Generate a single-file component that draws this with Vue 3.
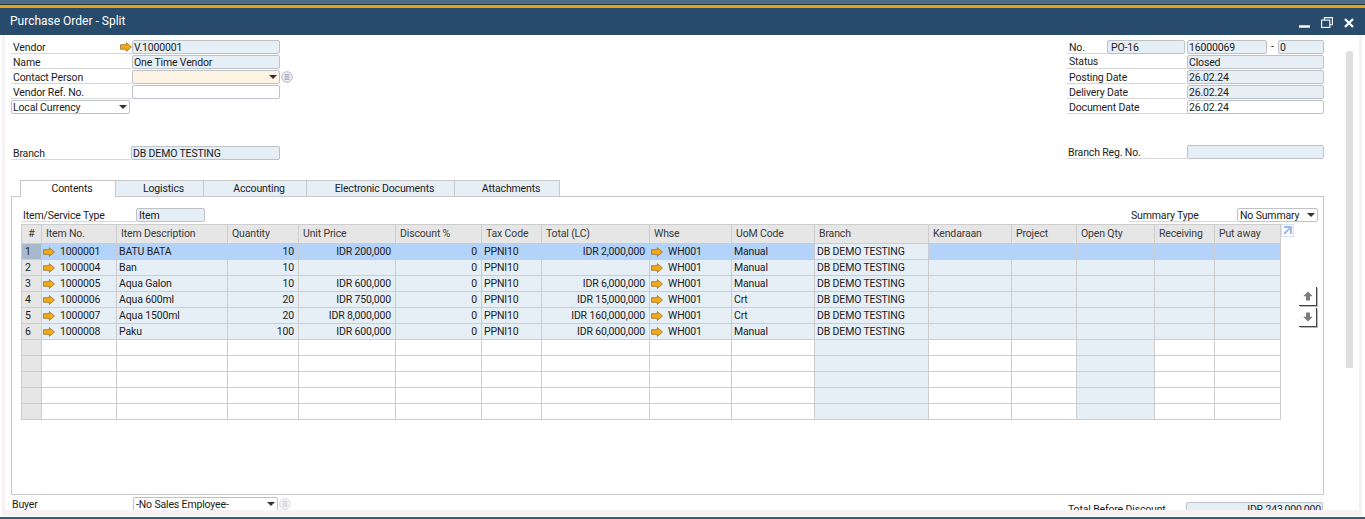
<script setup>
const cols = ['#','Item No.','Item Description','Quantity','Unit Price','Discount %','Tax Code','Total (LC)','Whse','UoM Code','Branch','Kendaraan','Project','Open Qty','Receiving','Put away']
const rows = [
  ['1000001','BATU BATA','10','IDR 200,000','IDR 2,000,000','Manual'],
  ['1000004','Ban','10','','','Manual'],
  ['1000005','Aqua Galon','10','IDR 600,000','IDR 6,000,000','Manual'],
  ['1000006','Aqua 600ml','20','IDR 750,000','IDR 15,000,000','Crt'],
  ['1000007','Aqua 1500ml','20','IDR 8,000,000','IDR 160,000,000','Crt'],
  ['1000008','Paku','100','IDR 600,000','IDR 60,000,000','Manual'],
]
const tabs = [
  { name: 'Contents', cls: 'w-contents' },
  { name: 'Logistics', cls: 'w-logistics' },
  { name: 'Accounting', cls: 'w-accounting' },
  { name: 'Electronic Documents', cls: 'w-electronic' },
  { name: 'Attachments', cls: 'w-attachments' },
]
const emptyRows = 5
const blankCols = 16
const arrowPath = 'M0.5 2.7H6.3V0.6L11.5 5L6.3 9.4V7.3H0.5Z'
</script>

<template>
  <div class="window">
    <div class="strip"></div>
    <div class="strip-line"></div>
    <div class="strip-orange"></div>
    <header class="titlebar">
      <span class="title">Purchase Order - Split</span>
      <div class="win-controls">
        <svg width="11" height="3" viewBox="0 0 11 3"><rect width="11" height="2.4" y="0.3" fill="#fff"/></svg>
        <svg width="12" height="11" viewBox="0 0 12 11" fill="none" stroke="#fff" stroke-width="1.1"><rect x="0.6" y="3.1" width="8.2" height="7.3"/><path d="M3.4 3V0.6H11.4V7.8H8.9"/></svg>
        <svg width="10" height="10" viewBox="0 0 10 10" fill="none" stroke="#fff" stroke-width="2.3"><path d="M1 1L9 9M9 1L1 9"/></svg>
      </div>
    </header>

    <div class="body">
      <div class="gutter-left"></div>
      <main class="content">
        <section class="head">
          <div class="head-left">
            <div class="row">
              <div class="label">Vendor
                <svg class="arrow" width="12" height="10" viewBox="0 0 12 10"><path :d="arrowPath" fill="#f4a817" stroke="#94742a" stroke-width="0.8"/></svg>
              </div>
              <div class="field">V.1000001</div>
            </div>
            <div class="row"><div class="label">Name</div><div class="field">One Time Vendor</div></div>
            <div class="row">
              <div class="label">Contact Person</div>
              <div class="field cream"><i class="caret"></i></div>
              <svg class="list-btn" width="12" height="12" viewBox="0 0 12 12"><circle cx="6" cy="6" r="5.3" fill="#eceef4" stroke="#b4b8cc"/><path d="M3.5 3.8H8.5M3.5 6H8.5M3.5 8.2H8.5" stroke="#8a90a8"/></svg>
            </div>
            <div class="row"><div class="label">Vendor Ref. No.</div><div class="field white"></div></div>
            <div class="row"><div class="field white currency">Local Currency<i class="caret"></i></div></div>
            <div class="row branch-row"><div class="label short">Branch</div><div class="field wide">DB DEMO TESTING</div></div>
          </div>

          <div class="head-right">
            <div class="row">
              <div class="label no-label">No.</div>
              <div class="field series">PO-16</div>
              <div class="field docnum">16000069</div>
              <span class="dash">-</span>
              <div class="field copy">0</div>
            </div>
            <div class="row"><div class="label r-label status-label">Status</div><div class="field r-field">Closed</div></div>
            <div class="row"><div class="label r-label">Posting Date</div><div class="field r-field">26.02.24</div></div>
            <div class="row"><div class="label r-label">Delivery Date</div><div class="field r-field">26.02.24</div></div>
            <div class="row"><div class="label r-label">Document Date</div><div class="field r-field white">26.02.24</div></div>
            <div class="row reg-row"><div class="label r-label reg-label">Branch Reg. No.</div><div class="field r-field"></div></div>
          </div>
        </section>

        <nav class="tabs">
          <div v-for="(t, i) in tabs" :key="t.name" class="tab" :class="[t.cls, { active: i === 0 }]">{{ t.name }}</div>
        </nav>

        <section class="panel">
          <div class="type-row">
            <div class="type-left">
              <div class="label type-label">Item/Service Type</div>
              <div class="field type-field">Item</div>
            </div>
            <div class="type-right">
              <div class="label summary-label">Summary Type</div>
              <div class="field white summary-field">No Summary<i class="caret"></i></div>
            </div>
          </div>

          <div class="table-wrap">
            <div class="grid">
              <div v-for="c in cols" :key="c" class="cell hd" :class="{ 'hd-num': c === '#' }">{{ c }}</div>

              <template v-for="(r, i) in rows" :key="r[0]">
                <div class="cell num" :class="{ 'num-sel': i === 0 }">{{ i + 1 }}</div>
                <div class="cell blue link" :class="{ sel: i === 0 }">
                  <svg class="arrow" width="12" height="10" viewBox="0 0 12 10"><path :d="arrowPath" fill="#f4a817" stroke="#94742a" stroke-width="0.8"/></svg>
                  <span>{{ r[0] }}</span>
                </div>
                <div class="cell blue" :class="{ sel: i === 0 }">{{ r[1] }}</div>
                <div class="cell blue right" :class="{ sel: i === 0 }">{{ r[2] }}</div>
                <div class="cell blue right" :class="{ sel: i === 0 }">{{ r[3] }}</div>
                <div class="cell blue right" :class="{ sel: i === 0 }">0</div>
                <div class="cell blue" :class="{ sel: i === 0 }">PPNI10</div>
                <div class="cell blue right" :class="{ sel: i === 0 }">{{ r[4] }}</div>
                <div class="cell blue link" :class="{ sel: i === 0 }">
                  <svg class="arrow" width="12" height="10" viewBox="0 0 12 10"><path :d="arrowPath" fill="#f4a817" stroke="#94742a" stroke-width="0.8"/></svg>
                  <span>WH001</span>
                </div>
                <div class="cell blue" :class="{ sel: i === 0 }">{{ r[5] }}</div>
                <div class="cell blue">DB DEMO TESTING</div>
                <div class="cell blue" :class="{ sel: i === 0 }"></div>
                <div class="cell blue" :class="{ sel: i === 0 }"></div>
                <div class="cell blue" :class="{ sel: i === 0 }"></div>
                <div class="cell blue" :class="{ sel: i === 0 }"></div>
                <div class="cell blue" :class="{ sel: i === 0 }"></div>
              </template>

              <template v-for="e in emptyRows" :key="'e' + e">
                <div
                  v-for="n in blankCols"
                  :key="n"
                  class="cell"
                  :class="{ num: n === 1, blue: n === 11 || n === 14 }"
                ></div>
              </template>
            </div>

            <aside class="side">
              <svg class="expand" width="13" height="13" viewBox="0 0 13 13"><rect x="0.5" y="0.5" width="12" height="12" fill="#fff" stroke="#d3e0f5"/><path d="M3 3H10V10M10 3L3 10" fill="none" stroke="#9db9e6" stroke-width="2"/></svg>
              <button class="move up" type="button" aria-label="Move up">
                <svg width="10" height="10" viewBox="0 0 10 10"><path d="M5 0.5L9.8 5.2H7V9.5H3V5.2H0.2Z" fill="#7c7c7c"/></svg>
              </button>
              <button class="move" type="button" aria-label="Move down">
                <svg width="10" height="10" viewBox="0 0 10 10"><path d="M5 9.5L9.8 4.8H7V0.5H3V4.8H0.2Z" fill="#7c7c7c"/></svg>
              </button>
            </aside>
          </div>
        </section>

        <section class="foot">
          <div class="foot-left">
            <span class="buyer-label">Buyer</span>
            <div class="field white buyer">-No Sales Employee-<i class="caret"></i></div>
            <svg class="list-btn" width="12" height="12" viewBox="0 0 12 12"><circle cx="6" cy="6" r="5.3" fill="#f6f6f8" stroke="#d4d6dc"/><path d="M3.5 3.8H8.5M3.5 6H8.5M3.5 8.2H8.5" stroke="#c0c2ca"/></svg>
          </div>
          <div class="foot-right">
            <span class="total-label">Total Before Discount</span>
            <div class="field total">IDR 243,000,000</div>
          </div>
        </section>
      </main>
      <div class="rail"><div class="scrollbar"></div></div>
      <div class="gutter-right"></div>
    </div>

    <div class="bottom-strip"></div>
    <div class="bottom-line"></div>
  </div>
</template>

<style>
html, body { margin: 0; background: #fff; overflow: hidden; }
</style>

<style scoped>
.window {
  width: 1365px;
  height: 519px;
  display: flex;
  flex-direction: column;
  overflow: hidden;
  background: #fff;
  color: #1c1c1c;
  font-family: Roboto, "Liberation Sans", Arial, sans-serif;
  font-size: 10.5px;
  letter-spacing: -0.15px;
  line-height: 13px;
}
.strip { height: 4px; background: #4f6d84; flex: none; }
.strip-line { height: 1px; background: #1f3447; flex: none; }
.strip-orange { height: 3px; background: #e9a20f; flex: none; }
.titlebar {
  height: 27px;
  flex: none;
  background: #284b6b;
  color: #fff;
  display: flex;
  align-items: center;
  justify-content: space-between;
  padding: 0 11px 0 10px;
}
.title { font-size: 12px; letter-spacing: 0; }
.win-controls { display: flex; align-items: flex-end; gap: 11px; margin-bottom: -1px; }

.body { flex: 1; min-height: 0; display: flex; overflow: hidden; }
.gutter-left {
  width: 3px;
  margin-left: 2px;
  background: #f5f1f5;
  flex: none;
}
.content {
  flex: 1;
  min-width: 0;
  padding: 5px 0 0 6px;
  overflow: hidden;
}
.rail { width: 35px; flex: none; padding: 16px 6px 0 22px; box-sizing: border-box; }
.scrollbar { width: 7px; height: 317px; background: #dedede; border-radius: 3px 3px 0 0; }
.gutter-right { width: 3px; background: #f5f1f5; margin-right: 3px; flex: none; }
.bottom-strip { height: 6px; margin: 0 3px 1px 2px; background: #f5f1f5; flex: none; }
.bottom-line { height: 2px; background: #3c5a72; flex: none; }

.head { display: flex; justify-content: space-between; height: 140px; }
.head-left { width: 285px; }
.head-right { width: 257px; }
.row { display: flex; height: 14px; margin-bottom: 1px; align-items: flex-start; }

.label {
  width: 121px;
  height: 14px;
  box-sizing: border-box;
  flex: none;
  padding: 1px 0 0 2px;
  border-bottom: 1px solid #d8d8d8;
  display: flex;
  align-items: center;
  justify-content: space-between;
}
.label.short { width: 120px; }
.status-label { padding-top: 0; }
.reg-label { padding-left: 1px; }
.arrow { flex: none; }

.field {
  width: 148px;
  height: 14px;
  box-sizing: border-box;
  flex: none;
  padding: 0 1px;
  border: 1px solid #bcc2c8;
  border-radius: 2px;
  background: #e6eef6;
  display: flex;
  align-items: center;
  white-space: nowrap;
  overflow: hidden;
}
.field.wide { width: 149px; }
.white { background: #fff; }
.cream { background: #fdf4e3; }
.caret {
  margin-left: auto;
  margin-right: 1px;
  width: 0;
  height: 0;
  border-left: 4px solid transparent;
  border-right: 4px solid transparent;
  border-top: 4px solid #333;
  flex: none;
}
.list-btn { flex: none; margin: 1px 0 0 1px; }
.currency { width: 119px; }
.branch-row { margin-top: 32px; }

.no-label { width: 40px; }
.series { width: 78px; padding-left: 3px; }
.docnum { width: 80px; margin-left: 2px; }
.dash { width: 11px; text-align: center; flex: none; }
.copy { width: 46px; }
.r-label { width: 120px; }
.r-field { width: 137px; }
.reg-row { margin-top: 31px; }

.tabs { display: flex; padding-left: 9px; height: 16px; position: relative; z-index: 1; }
.tab {
  height: 16px;
  box-sizing: border-box;
  padding-left: 8px;
  border: 1px solid #c8c8c8;
  border-left: 0;
  border-bottom: 0;
  background: #e6eef6;
  text-align: center;
  line-height: 15px;
  flex: none;
}
.tab.active {
  background: #fff;
  height: 17px;
  border-left: 1px solid #c8c8c8;
}
.w-contents { width: 96px; }
.w-logistics { width: 88px; }
.w-accounting { width: 103px; }
.w-electronic { width: 148px; }
.w-attachments { width: 105px; }

.panel {
  width: 1313px;
  height: 299px;
  box-sizing: border-box;
  border: 1px solid #c8c8c8;
  padding: 11px 5px 0 9px;
}
.type-row { display: flex; justify-content: space-between; height: 14px; margin-bottom: 2px; }
.type-left, .type-right { display: flex; }
.type-label { width: 115px; }
.type-field { width: 69px; padding-left: 2px; }
.summary-label { width: 108px; padding-left: 2px; }
.summary-field { width: 81px; padding-left: 2px; }

.table-wrap { display: flex; align-items: flex-start; }
.grid {
  display: grid;
  grid-template-columns: 20px 75px 111px 71px 97px 86px 60px 108px 82px 83px 114px 83px 65px 78px 60px 67px;
  grid-template-rows: 19px;
  grid-auto-rows: 16px;
  border-top: 1px solid #cdcdcd;
  flex: none;
}
.cell {
  box-sizing: border-box;
  border-left: 1px solid #cdcdcd;
  border-bottom: 1px solid #cdcdcd;
  padding: 0 4px 0 2px;
  display: flex;
  align-items: center;
  white-space: nowrap;
  overflow: hidden;
  height: 16px;
  background: #fff;
}
.cell:nth-child(16n) { border-right: 1px solid #cdcdcd; }
.hd {
  height: 19px;
  background: #e6e6e6;
  color: #3a3a3a;
  padding: 0 4px 2px;
}
.hd-num { justify-content: center; padding: 0 0 2px; }
.num { background: #e6e6e6; padding-left: 3px; }
.num-sel { background: #a9b9cc; }
.blue { background: #e6eef6; }
.sel { background: #b4d3fa; }
.right { justify-content: flex-end; }
.link { gap: 5px; padding-left: 1px; }

.side { flex: none; width: 36px; }
.expand { display: block; }
.move {
  display: flex;
  align-items: center;
  justify-content: center;
  width: 18px;
  height: 19px;
  padding: 0;
  margin: 0 0 2px 18px;
  background: #fff;
  border: 0;
  border-right: 1px solid #444;
  border-bottom: 1px solid #444;
  box-shadow: 1px 1px 0 #b8b8b8;
}
.up { margin-top: 50px; }

.foot { display: flex; justify-content: space-between; width: 1313px; margin-top: 2px; }
.foot-left { display: flex; align-items: flex-start; }
.buyer-label { width: 122px; box-sizing: border-box; padding: 1px 0 0 1px; }
.buyer { width: 145px; padding-left: 2px; }
.foot-right { display: flex; margin-top: 5px; padding-right: 1px; }
.total-label { width: 118px; padding-top: 1px; }
.total { width: 137px; justify-content: flex-end; }
</style>
